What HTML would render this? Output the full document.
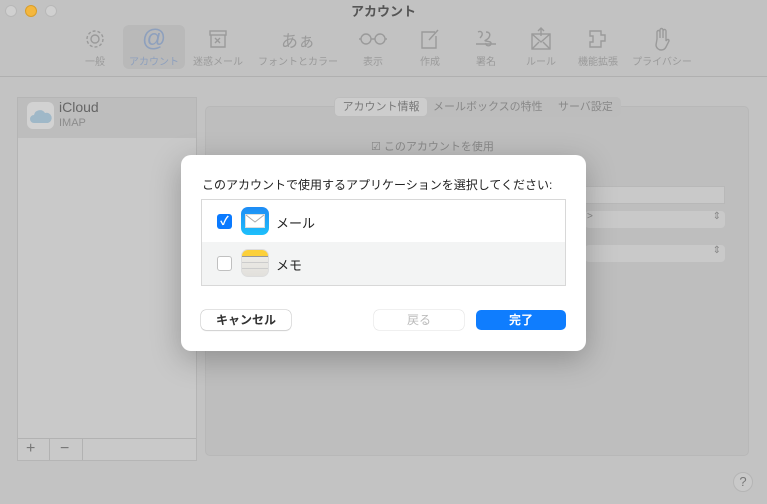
<!DOCTYPE html>
<html><head><meta charset="utf-8"><style>
*{margin:0;padding:0;box-sizing:border-box}
body{width:767px;height:504px;overflow:hidden;background:#c3c3c3;font-family:"Liberation Sans","Noto Sans CJK JP",sans-serif;position:relative;color:#222}
.abs{position:absolute}
.tb{top:0;left:0;width:767px;height:77px;background:#c2c2c2;border-bottom:1px solid #b0b0b0}
.dot{width:12px;height:12px;border-radius:50%;top:5px}
.item{top:25px;height:44px;text-align:center;font-size:10px;color:#9a9a9a}
.item .ic{height:28px;display:flex;align-items:center;justify-content:center}
.item svg{stroke:#9a9a9a;fill:none;stroke-width:1.4}
.lbl{margin-top:0;white-space:nowrap}
</style></head><body>
<div class="abs tb"></div>
<div class="abs dot" style="left:5px;background:#d0d0d0;border:1px solid #b8b8b8"></div>
<div class="abs dot" style="left:25px;background:#f4b73e;border:1px solid #d99e2a"></div>
<div class="abs dot" style="left:45px;background:#d0d0d0;border:1px solid #b8b8b8"></div>
<div class="abs" style="top:1px;left:0;width:767px;text-align:center;font-size:13px;font-weight:bold;color:#555">アカウント</div>

<div class="abs" style="left:123px;top:25px;width:62px;height:44px;background:#b9b9b9;border-radius:6px"></div>
<div class="abs item" style="left:70px;width:50px"><div class="ic"><svg width="22" height="22" viewBox="0 0 22 22"><circle cx="11" cy="11" r="4"/><circle cx="11" cy="11" r="8" stroke-dasharray="3 2"/></svg></div><div class="lbl">一般</div></div>
<div class="abs item" style="left:124px;width:60px;color:#8ea0bd"><div class="ic" style="font-size:24px;color:#8ea0bd">@</div><div class="lbl">アカウント</div></div>
<div class="abs item" style="left:190px;width:56px"><div class="ic"><svg width="22" height="22" viewBox="0 0 22 22"><rect x="3" y="3" width="16" height="4"/><path d="M4 7v12h14V7M8 10l5 5M13 10l-5 5"/></svg></div><div class="lbl">迷惑メール</div></div>
<div class="abs item" style="left:256px;width:84px"><div class="ic" style="font-size:17px;color:#9a9a9a">あぁ</div><div class="lbl">フォントとカラー</div></div>
<div class="abs item" style="left:350px;width:46px"><div class="ic"><svg width="28" height="16" viewBox="0 0 28 16"><circle cx="7" cy="8" r="5"/><circle cx="21" cy="8" r="5"/><path d="M12 8h4M0 8h2M26 8h2"/></svg></div><div class="lbl">表示</div></div>
<div class="abs item" style="left:408px;width:44px"><div class="ic"><svg width="22" height="22" viewBox="0 0 22 22"><path d="M16 4H3v16h14V8M19 2l-9 10"/></svg></div><div class="lbl">作成</div></div>
<div class="abs item" style="left:464px;width:44px"><div class="ic"><svg width="24" height="22" viewBox="0 0 24 22"><path d="M2 16h20M4 4c4-2 6 2 2 6M12 4c6 0 4 6 0 8s6 0 5 4c-1 3-6 2-5-1"/></svg></div><div class="lbl">署名</div></div>
<div class="abs item" style="left:518px;width:46px"><div class="ic"><svg width="22" height="24" viewBox="0 0 22 24"><rect x="2" y="7" width="18" height="15"/><path d="M2 7l9 8 9-8M2 22l7-7M20 22l-7-7M11 1v8M8 4l3-3 3 3"/></svg></div><div class="lbl">ルール</div></div>
<div class="abs item" style="left:574px;width:48px"><div class="ic"><svg width="22" height="22" viewBox="0 0 22 22"><path d="M3 3h11v4h4v6h-4v6H3v-5h3v-6H3z"/></svg></div><div class="lbl">機能拡張</div></div>
<div class="abs item" style="left:628px;width:68px"><div class="ic"><svg width="20" height="24" viewBox="0 0 20 24"><path d="M5 12V5a1.5 1.5 0 013 0v6V3a1.5 1.5 0 013 0v8V4a1.5 1.5 0 013 0v8 2c1-2 3-2 3 0l-3 6c-1 2-3 3-5 3s-5-2-5-5z"/></svg></div><div class="lbl">プライバシー</div></div>

<!-- sidebar -->
<div class="abs" style="left:17px;top:97px;width:180px;height:364px;background:#c9c9c9;border:1px solid #b5b5b5"></div>
<div class="abs" style="left:18px;top:98px;width:178px;height:40px;background:#bdbdbd"></div>
<div class="abs" style="left:27px;top:102px;width:27px;height:27px;border-radius:6px;background:#d2d2d2"></div>
<svg class="abs" style="left:29px;top:108px" width="24" height="16" viewBox="0 0 24 16"><path d="M5 15a4 4 0 010-8 6 6 0 0111-2 4 4 0 013 10z" fill="#9fb8c8"/></svg>
<div class="abs" style="left:59px;top:99px;font-size:14px;color:#666">iCloud</div>
<div class="abs" style="left:59px;top:117px;font-size:11px;color:#8c8c8c">IMAP</div>
<div class="abs" style="left:18px;top:438px;width:178px;height:1px;background:#b2b2b2"></div>
<div class="abs" style="left:49px;top:439px;width:1px;height:21px;background:#b2b2b2"></div>
<div class="abs" style="left:82px;top:439px;width:1px;height:21px;background:#b2b2b2"></div>
<div class="abs" style="left:26px;top:440px;font-size:16px;color:#777">+</div>
<div class="abs" style="left:60px;top:440px;font-size:16px;color:#777">−</div>

<!-- right panel -->
<div class="abs" style="left:205px;top:106px;width:544px;height:350px;background:#bebebe;border:1px solid #b8b8b8;border-radius:5px"></div>
<div class="abs" style="left:334px;top:97px;width:287px;height:20px;background:#bdbdbd;border-radius:5px;font-size:11px;color:#777"></div>
<div class="abs" style="left:335px;top:98px;width:92px;height:18px;background:#cdcdcd;border-radius:4px;font-size:11px;color:#777;text-align:center;line-height:18px">アカウント情報</div>
<div class="abs" style="left:433px;top:98px;font-size:11px;color:#888;line-height:18px">メールボックスの特性</div>
<div class="abs" style="left:558px;top:98px;font-size:11px;color:#888;line-height:18px">サーバ設定</div>
<div class="abs" style="left:371px;top:138px;font-size:11px;color:#888">☑ このアカウントを使用</div>
<div class="abs" style="left:585px;top:186px;width:140px;height:18px;background:#c9c9c9;border:1px solid #b8b8b8"></div>
<div class="abs" style="left:585px;top:211px;width:140px;height:17px;background:#c9c9c9;border-radius:4px;font-size:10px;color:#888;padding-left:2px">&gt;<span style="float:right;margin-right:4px">⇕</span></div>
<div class="abs" style="left:585px;top:245px;width:140px;height:17px;background:#c9c9c9;border-radius:4px;font-size:10px;color:#888"><span style="float:right;margin-right:4px">⇕</span></div>
<div class="abs" style="left:733px;top:472px;width:20px;height:20px;border-radius:50%;background:#c9c9c9;border:1px solid #b5b5b5;text-align:center;font-size:13px;color:#777;line-height:18px">?</div>

<!-- dialog -->
<div class="abs" style="left:181px;top:155px;width:405px;height:196px;background:#fff;border-radius:10px;box-shadow:0 8px 30px rgba(0,0,0,.25)"></div>
<div class="abs" style="left:202px;top:176px;font-size:12px;color:#222">このアカウントで使用するアプリケーションを選択してください:</div>
<div class="abs" style="left:201px;top:199px;width:365px;height:87px;border:1px solid #d8d8d8;background:#fff"></div>
<div class="abs" style="left:202px;top:242px;width:363px;height:43px;background:#f3f4f4"></div>
<div class="abs" style="left:217px;top:214px;width:15px;height:15px;border-radius:3px;background:#0a7aff;color:#fff;font-size:12px;text-align:center;line-height:15px;font-weight:bold">✓</div>
<div class="abs" style="left:217px;top:256px;width:15px;height:15px;border-radius:3px;background:#fff;border:1px solid #c0c0c0"></div>
<div class="abs" style="left:241px;top:207px;width:28px;height:28px;border-radius:7px;background:linear-gradient(#1e8bf5,#1ec0fb)"></div>
<svg class="abs" style="left:245px;top:214px" width="20" height="14" viewBox="0 0 20 14"><rect x="0.5" y="0.5" width="19" height="13" fill="#fff" stroke="#ddd"/><path d="M1 1l9 7 9-7" fill="none" stroke="#aaa"/></svg>
<div class="abs" style="left:241px;top:249px;width:28px;height:28px;border-radius:7px;background:linear-gradient(#f0efea,#e2e0dc);overflow:hidden;border:1px solid #ddd">
<div style="height:7px;background:#fcd03a;border-bottom:1px solid #999"></div>
<div style="height:6px;border-bottom:1px solid #ccc"></div><div style="height:6px;border-bottom:1px solid #ccc"></div></div>
<div class="abs" style="left:276px;top:213px;font-size:13px">メール</div>
<div class="abs" style="left:276px;top:255px;font-size:13px">メモ</div>
<div class="abs" style="left:201px;top:310px;width:90px;height:20px;border-radius:5px;background:#fff;box-shadow:0 0 0 .5px #c4c4c4,0 1px 1px rgba(0,0,0,.15);font-size:12px;text-align:center;line-height:20px;font-weight:bold;color:#333">キャンセル</div>
<div class="abs" style="left:374px;top:310px;width:90px;height:20px;border-radius:5px;background:#fff;box-shadow:0 0 0 .5px #e0e0e0;font-size:12px;text-align:center;line-height:20px;color:#bbb">戻る</div>
<div class="abs" style="left:476px;top:310px;width:90px;height:20px;border-radius:5px;background:#0f7dfe;font-size:12px;text-align:center;line-height:20px;color:#fff;font-weight:bold">完了</div>
</body></html>
